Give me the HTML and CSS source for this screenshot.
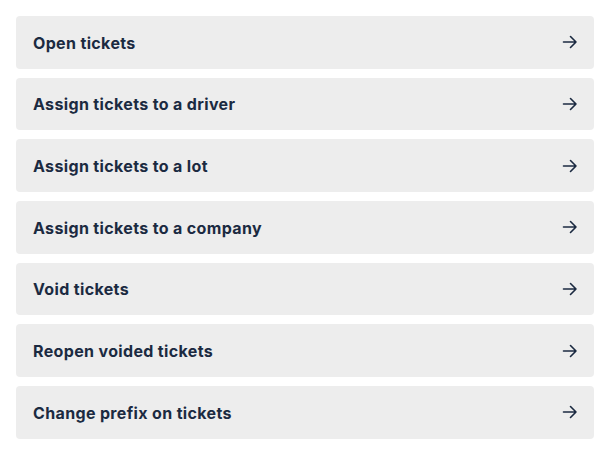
FILE: index.html
```html
<!DOCTYPE html>
<html>
<head>
<meta charset="utf-8">
<link rel="stylesheet" href="styles.css">
</head>
<body>
<div class="list">
  <a class="item"><span class="label">Open tickets</span><svg class="arrow" viewBox="0 0 16 16"><path d="M1.5 8h12.5M8.5 2.5L14 8l-5.5 5.5"/></svg></a>
  <a class="item"><span class="label">Assign tickets to a driver</span><svg class="arrow" viewBox="0 0 16 16"><path d="M1.5 8h12.5M8.5 2.5L14 8l-5.5 5.5"/></svg></a>
  <a class="item"><span class="label">Assign tickets to a lot</span><svg class="arrow" viewBox="0 0 16 16"><path d="M1.5 8h12.5M8.5 2.5L14 8l-5.5 5.5"/></svg></a>
  <a class="item"><span class="label">Assign tickets to a company</span><svg class="arrow" viewBox="0 0 16 16"><path d="M1.5 8h12.5M8.5 2.5L14 8l-5.5 5.5"/></svg></a>
  <a class="item"><span class="label">Void tickets</span><svg class="arrow" viewBox="0 0 16 16"><path d="M1.5 8h12.5M8.5 2.5L14 8l-5.5 5.5"/></svg></a>
  <a class="item"><span class="label">Reopen voided tickets</span><svg class="arrow" viewBox="0 0 16 16"><path d="M1.5 8h12.5M8.5 2.5L14 8l-5.5 5.5"/></svg></a>
  <a class="item"><span class="label">Change prefix on tickets</span><svg class="arrow" viewBox="0 0 16 16"><path d="M1.5 8h12.5M8.5 2.5L14 8l-5.5 5.5"/></svg></a>
</div>
</body>
</html>
```
FILE: styles.css
```css
html, body { margin: 0; padding: 0; background: #ffffff; }
body { font-family: Inter, "Noto Sans", sans-serif; }
.list {
  display: flex;
  flex-direction: column;
  gap: 9px;
  padding: 16px 17px 16px 16px;
}
.item {
  display: flex;
  align-items: center;
  justify-content: space-between;
  height: 52.67px;
  box-sizing: border-box;
  padding: 1px 16px 0 17px;
  background: #ededed;
  border-radius: 4px;
  color: #1b2a41;
  text-decoration: none;
}
.label {
  font-size: 16px;
  font-weight: 700;
  line-height: 24px;
  letter-spacing: 0.35px;
}
.arrow {
  width: 16px;
  height: 16px;
  margin-top: -1px;
  fill: none;
  stroke: #1b2a41;
  stroke-width: 1.6;
  stroke-linecap: round;
  stroke-linejoin: round;
}
```
